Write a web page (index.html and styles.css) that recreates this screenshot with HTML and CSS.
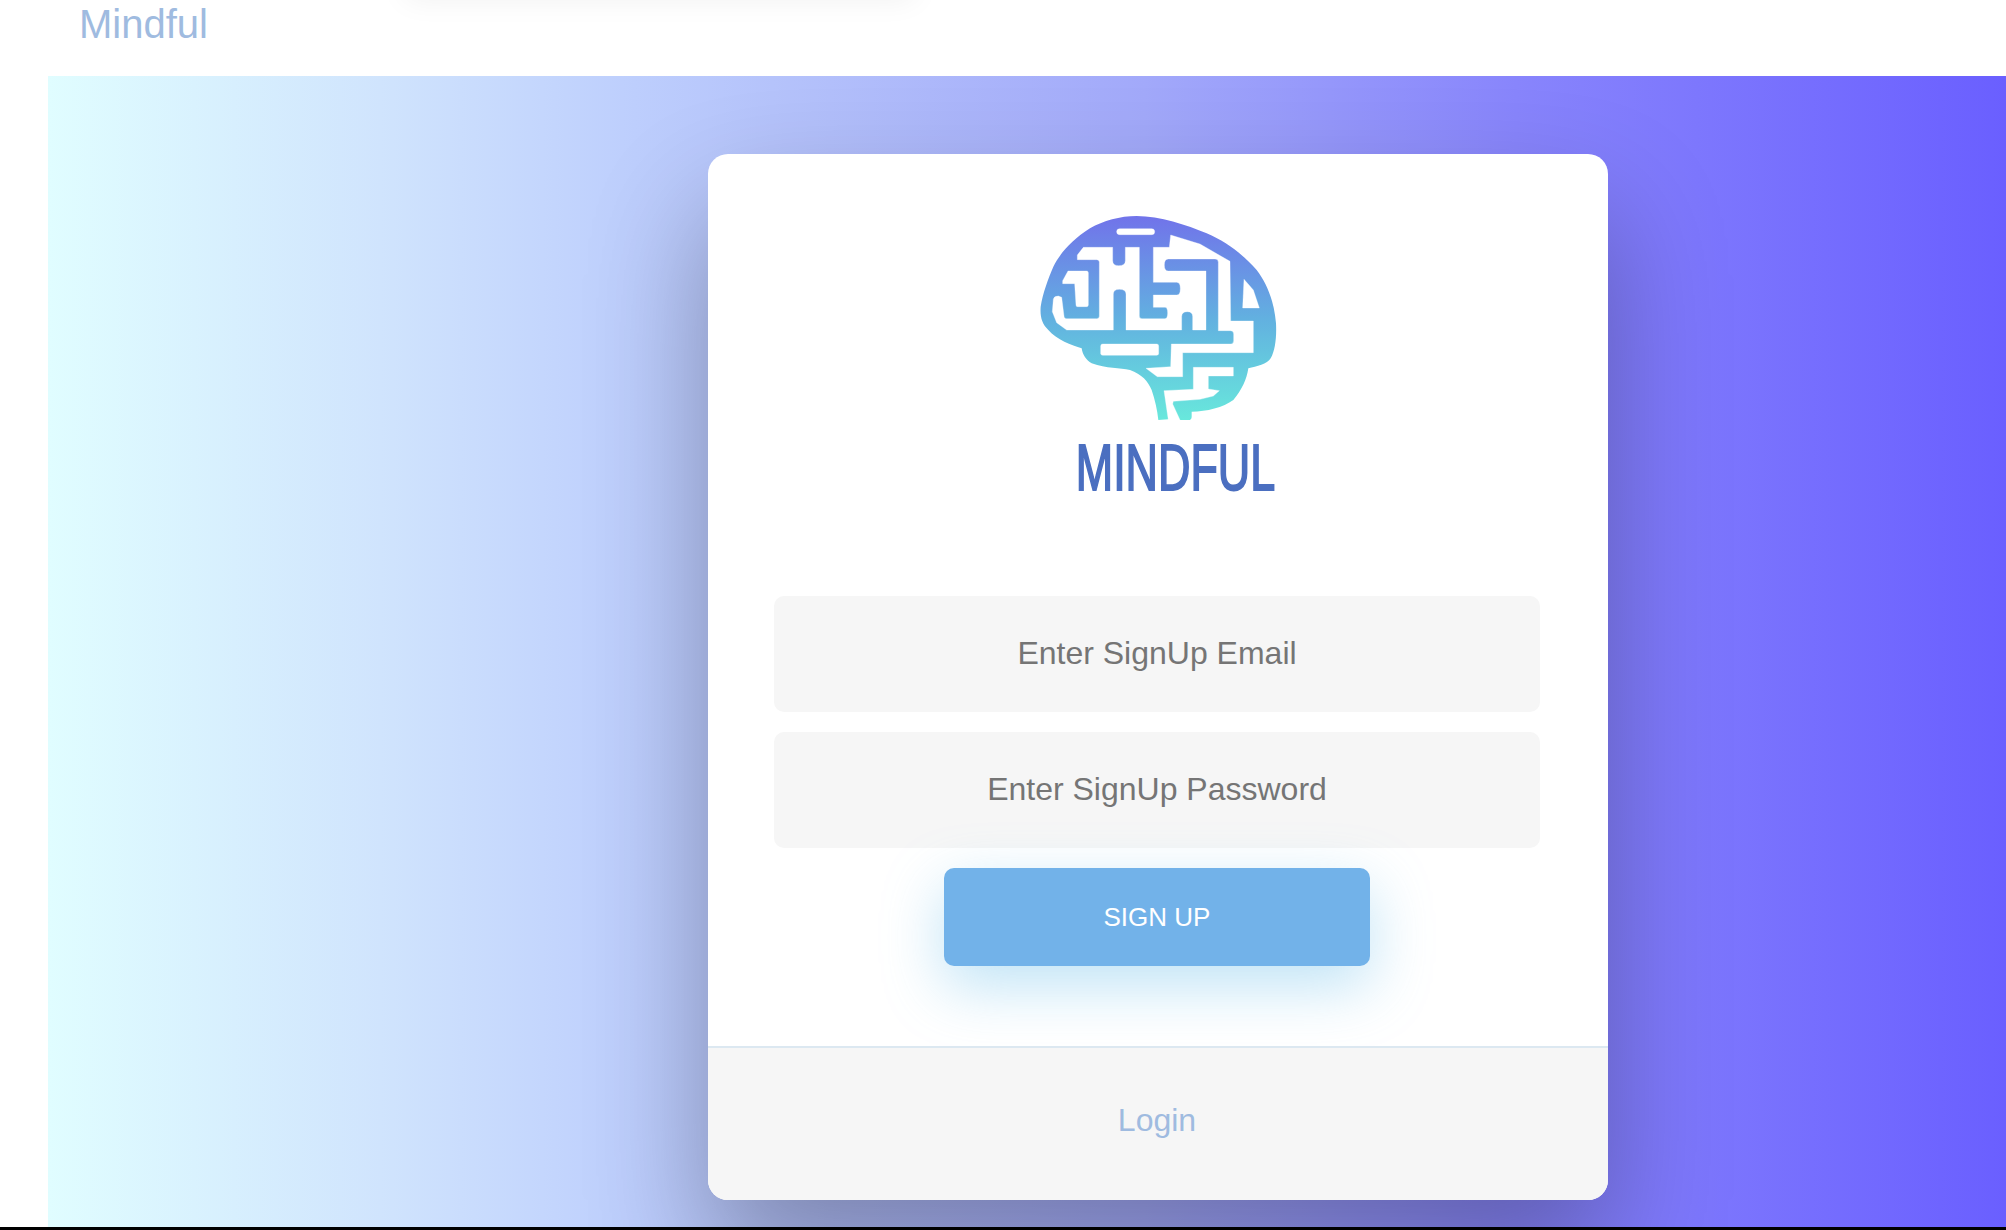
FILE: index.html
```html
<!DOCTYPE html>
<html lang="en">

<head>
    <meta charset="UTF-8">
    <title>Mindful</title>
    <link rel="stylesheet" href="styles.css">
</head>

<body>
    <div class="top-shadow"></div>
    <a class="brand" href="#">Mindful</a>

    <div class="wrapper">
        <div class="form-content">
            <div class="logo">
                <svg class="logo-brain" viewBox="-6 0 960 720" width="320" height="240">
                    <defs>
                        <linearGradient id="brain" x1="0" y1="78" x2="0" y2="690" gradientUnits="userSpaceOnUse">
                            <stop offset="0" stop-color="#7173ea"/>
                            <stop offset="0.5" stop-color="#62b0e0"/>
                            <stop offset="1" stop-color="#68e8dc"/>
                        </linearGradient>
                    </defs>
                    <!-- brain outline -->
                    <path fill="url(#brain)" d="M410 78C480 78 560 105 620 130C680 155 730 195 770 240C800 280 822 330 828 400C830 440 826 480 812 505C802 522 770 530 745 535C740 570 725 600 700 630C670 652 620 665 575 665L575 680Q575 690 565 690L540 690L505 688L475 690C472 660 465 630 455 600C445 575 425 552 390 540C360 533 320 537 275 520C258 510 248 495 245 475C215 465 170 450 145 420C125 400 120 380 122 350C128 310 145 265 160 230C180 190 215 150 270 115C310 92 360 78 410 78Z"/>
                    <!-- maze channels -->
                    <g fill="#fff" stroke="#fff" stroke-width="1" stroke-linejoin="round">
                        <rect x="350" y="116" width="114" height="18" rx="9"/>
                        <path d="M232 195L250 172L338 172L338 212Q338 227 356 227Q376 227 376 212L376 172L418 172L418 378Q418 386 426 386L495 386Q503 386 503 369Q503 352 495 352L460 352L460 315L530 315Q541 315 541 296Q541 277 530 277L460 277L460 172L508 172L512 135L600 162L690 214L692 393L760 393L760 488L548 488L548 560L472 560L438 535L512 530L514 462L691 462Q701 462 701 452L701 432Q701 422 691 422L655 422L655 217Q655 207 645 207L505 207Q493 207 493 225Q493 243 505 243L618 243L618 420L578 420L578 380Q578 365 562 365Q545 365 545 380L545 420L378 420L378 312Q378 298 358 298Q340 298 340 312L340 420L200 420L170 398L157 365L160 328Q162 318 175 318L185 322L192 378Q192 386 200 386L290 386Q298 386 298 378L298 217Q298 209 290 209L232 209Z"/>
                        <path d="M188 272L204 243L260 243Q265 243 265 248L265 345Q265 350 260 350L232 350Q228 350 228 345L224 281L188 281Z"/>
                        <path d="M732 268L760 300L778 354L728 354Z"/>
                        <rect x="302" y="462" width="174" height="34" rx="6"/>
                        <path d="M492 602L580 598L580 532L700 532L700 558L625 558L625 597L658 602L640 618L600 628L520 634L518 642L540 690L505 690Z"/>
                    </g>
                </svg>
                <div class="logo-word">MINDFUL</div>
            </div>

            <form class="signup-form" onsubmit="return false">
                <input type="text" placeholder="Enter SignUp Email">
                <input type="text" placeholder="Enter SignUp Password">
                <input type="button" value="Sign Up">
            </form>

            <div class="form-footer">
                <a class="underline" href="#">Login</a>
            </div>
        </div>
    </div>
</body>

</html>
```
FILE: styles.css
```css
html, body {
    height: 100%;
}

body {
    margin: 0;
    height: 1230px;
    overflow: hidden;
    background: #fff;
    font-family: "Liberation Sans", Arial, sans-serif;
    border-bottom: 3px solid #000;
    box-sizing: border-box;
    position: relative;
}

a {
    color: #9fbbe0;
    text-decoration: none;
}

.brand {
    display: block;
    height: 76px;
    padding-left: 79px;
    font-size: 40px;
    line-height: 48px;
}

.top-shadow {
    position: absolute;
    top: -40px;
    left: 405px;
    width: 510px;
    height: 40px;
    box-shadow: 0 0 30px rgba(0, 0, 0, 0.06);
}

.wrapper {
    height: 1151px;
    margin-left: 48px;
    padding-top: 78px;
    box-sizing: border-box;
    background: linear-gradient(to right, #e0fdff 0%, #d0e4fd 17%, #bdcefd 30%, #b5c3fb 37%, #a2a9fa 56%, #8885fc 75%, #6a5fff 100%);
}

.form-content {
    width: 900px;
    height: 1046px;
    margin-left: 660px;
    background: #fff;
    border-radius: 20px;
    box-shadow: 0 60px 120px rgba(0, 0, 0, 0.3);
    display: flex;
    flex-direction: column;
    align-items: center;
    overflow: hidden;
}

.logo {
    display: flex;
    flex-direction: column;
    align-items: center;
    height: 330px;
    margin-top: 36px;
    flex: none;
}

.logo-brain {
    display: block;
    flex: none;
}

.logo-word {
    margin: 5px 0 0 35px;
    font-size: 65px;
    line-height: 66px;
    color: #4b6fc0;
    -webkit-text-stroke: 2px #4b6fc0;
    transform: scaleX(0.69);
}

.signup-form {
    display: flex;
    flex-direction: column;
    align-items: center;
    gap: 20px;
    width: 100%;
    margin-top: 76px;
    padding-right: 2px;
    padding-bottom: 80px;
    box-sizing: border-box;
}

input[type=text] {
    width: 766px;
    height: 116px;
    padding: 0 0 2px;
    box-sizing: border-box;
    background: #f6f6f6;
    border: 0;
    border-radius: 10px;
    font-family: inherit;
    font-size: 32px;
    text-align: center;
}

input[type=text]::placeholder {
    color: #757575;
}

input[type=button] {
    width: 426px;
    height: 98px;
    background: #72b2e9;
    border: 0;
    border-radius: 10px;
    color: #fff;
    font-family: inherit;
    font-size: 26px;
    text-transform: uppercase;
    box-shadow: 0 20px 60px rgba(95, 186, 233, 0.4);
}

.form-footer {
    flex: 1;
    width: 100%;
    padding: 0 2px 7px 0;
    box-sizing: border-box;
    background: #f6f6f6;
    border-top: 2px solid #dce8f1;
    display: flex;
    align-items: center;
    justify-content: center;
}

.underline {
    font-size: 32px;
}
```
